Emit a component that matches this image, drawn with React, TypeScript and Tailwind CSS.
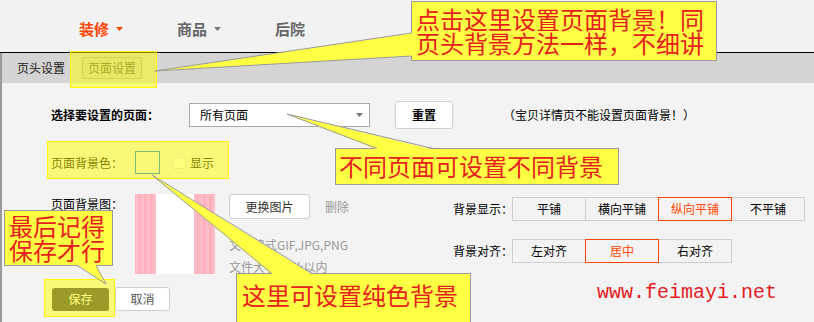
import type { ReactNode } from 'react'

const Caret = ({ color }: { color: string }) => (
  <svg width="7" height="4" viewBox="0 0 7 4" className="ml-[7px]">
    <polygon points="0,0 7,0 3.5,4" fill={color} />
  </svg>
)

const Highlight = ({ className }: { className: string }) => (
  <div className={`absolute border border-[#ffff00] bg-[#ffff00]/50 ${className}`} />
)

const Callout = ({ className, children }: { className: string; children: ReactNode }) => (
  <div
    className={`absolute z-10 whitespace-nowrap border border-[#9a9a9a] bg-[#ffff44] text-[24px] leading-[24px] text-[#e8201c] ${className}`}
  >
    {children}
  </div>
)

const Segments = ({ items, active }: { items: string[]; active: number }) => (
  <div className="flex">
    {items.map((item, i) => (
      <div
        key={item}
        className={`flex h-[24px] w-[74px] items-center justify-center border bg-[#f3f3f3] ${
          i > 0 ? '-ml-px' : ''
        } ${i === active ? 'relative z-[1] border-[#ff4400] text-[#ff4400]' : 'border-[#cfcfcf] text-black'}`}
      >
        {item}
      </div>
    ))}
  </div>
)

export default function App() {
  return (
    <div className="relative h-[322px] w-[814px] overflow-hidden bg-[#f3f3f3] font-['Noto_Sans_CJK_SC',sans-serif] text-[12px] leading-[14px] text-black">
      {/* top navigation */}
      <nav className="flex h-[53px] items-center border-b border-black bg-[#f2f2f2] pl-[79px] pt-[6px] text-[15px] font-bold">
        <div className="flex w-[98px] items-center text-[#ff4400]">
          装修
          <Caret color="#ff4400" />
        </div>
        <div className="flex w-[98px] items-center text-[#666]">
          商品
          <Caret color="#777" />
        </div>
        <div className="flex items-center text-[#666]">后院</div>
      </nav>

      <div className="h-[269px] border-l-2 border-[#9a9a9a]">
        {/* tab bar */}
        <div className="flex h-[30px] items-center bg-[#d4d4d4] pl-[15px]">
          <span className="text-[#222]">页头设置</span>
          <span className="ml-[17px] flex h-[22px] items-center rounded-[2px] border border-[#a8a8a8] bg-[#cfcfcf] px-[5px] text-[#555]">
            页面设置
          </span>
        </div>

        <div className="pl-[49px] pt-[18px]">
          {/* page select */}
          <div className="flex items-center whitespace-nowrap">
            <span className="w-[138px] font-bold">选择要设置的页面：</span>
            <div className="flex h-[24px] w-[181px] items-center justify-between border border-[#aaa] bg-white pl-[10px] pr-[6px]">
              <span>所有页面</span>
              <svg width="7" height="4" viewBox="0 0 7 4">
                <polygon points="0,0 7,0 3.5,4" fill="#777" />
              </svg>
            </div>
            <button className="ml-[25px] h-[28px] w-[58px] rounded-[3px] border border-[#d0d0d0] bg-white font-bold">
              重置
            </button>
            <span className="ml-[50px]">（宝贝详情页不能设置页面背景！）</span>
          </div>

          {/* background colour */}
          <div className="mt-[22px] flex items-center whitespace-nowrap">
            <span className="w-[84px]">页面背景色：</span>
            <div className="h-[23px] w-[25px] border border-[#0171f0] bg-[#f3f3f3]" />
            <div className="ml-[13px] h-[12px] w-[13px] border border-[#dcdcdc] bg-white" />
            <span className="ml-[4px]">显示</span>
          </div>

          {/* background image */}
          <div className="mt-[20px] flex whitespace-nowrap">
            <span className="w-[84px] pt-[3px]">页面背景图：</span>
            <div className="flex h-[80px] w-[80px]">
              <div className="w-[21px] bg-[repeating-linear-gradient(90deg,#ffb0bb_0px,#ffc6ce_2px,#ffa9b5_4px,#ffbcc5_6px)]" />
              <div className="w-[38px] bg-white" />
              <div className="w-[21px] bg-[repeating-linear-gradient(90deg,#ffb0bb_0px,#ffc6ce_2px,#ffa9b5_4px,#ffbcc5_6px)]" />
            </div>
            <div className="ml-[14px] flex flex-col text-[#999]">
              <div className="flex items-center">
                <button className="h-[25px] w-[81px] rounded-[3px] border border-[#cfcfcf] bg-white text-[#333]">
                  更换图片
                </button>
                <span className="ml-[15px]">删除</span>
              </div>
              <span className="mt-[19px]">文件格式GIF,JPG,PNG</span>
              <span className="mt-[8px]">文件大小200k以内</span>
            </div>
            <div className="ml-[104px] mt-[3px] flex flex-col gap-[18px]">
              <div className="flex items-center">
                <span className="w-[59px] shrink-0">背景显示：</span>
                <Segments items={['平铺', '横向平铺', '纵向平铺', '不平铺']} active={2} />
              </div>
              <div className="flex items-center">
                <span className="w-[59px] shrink-0">背景对齐：</span>
                <Segments items={['左对齐', '居中', '右对齐']} active={1} />
              </div>
            </div>
          </div>

          {/* actions */}
          <div className="mt-[13px] flex items-center gap-[6px] pl-[1px]">
            <button className="h-[23px] w-[57px] rounded-[3px] bg-[#393650] text-white">保存</button>
            <button className="h-[24px] w-[55px] rounded-[3px] border border-[#cfcfcf] bg-white text-[#555]">
              取消
            </button>
          </div>
        </div>
      </div>

      {/* annotations */}
      <Highlight className="left-[70px] top-[51px] h-[37px] w-[87px]" />
      <Highlight className="left-[47px] top-[141px] h-[38px] w-[182px]" />
      <Highlight className="left-[44px] top-[279px] h-[38px] w-[71px]" />

      <Callout className="left-[411px] top-[1px] h-[60px] w-[306px] pl-[4px] pt-[5px]">
        <div>点击这里设置页面背景！同</div>
        <div>页头背景方法一样，不细讲</div>
      </Callout>
      <Callout className="left-[335px] top-[148px] h-[37px] w-[284px] pl-[3px] pt-[5px]">
        不同页面可设置不同背景
      </Callout>
      <Callout className="left-[4px] top-[210px] h-[56px] w-[109px] pl-[4px] pt-[3px]">
        <div>最后记得</div>
        <div>保存才行</div>
      </Callout>
      <Callout className="left-[236px] top-[273px] h-[60px] w-[235px] pl-[5px] pt-[9px]">
        这里可设置纯色背景
      </Callout>

      <svg className="pointer-events-none absolute left-0 top-0 z-20" width="814" height="322">
        <g fill="#ffff44" stroke="none">
          <polygon points="155,71 413,33 413,56" />
          <polygon points="287,114 377,149.5 433,149.5" />
          <polygon points="106,284 77,264.5 96,264.5" />
          <polygon points="152,175 272,274.5 312,274.5" />
        </g>
        <g fill="none" stroke="#9a9a9a" strokeWidth="1">
          <polyline points="411.5,33 155,71 411.5,56" />
          <polyline points="377,148.5 287,114 433,148.5" />
          <polyline points="77,265.5 106,284 96,265.5" />
          <polyline points="272,273.5 152,175 312,273.5" />
        </g>
      </svg>

      <div className="absolute left-[597px] top-[281px] font-['Liberation_Mono',monospace] text-[20px] leading-[24px] text-[#e51c23]">
        www.feimayi.net
      </div>
    </div>
  )
}
